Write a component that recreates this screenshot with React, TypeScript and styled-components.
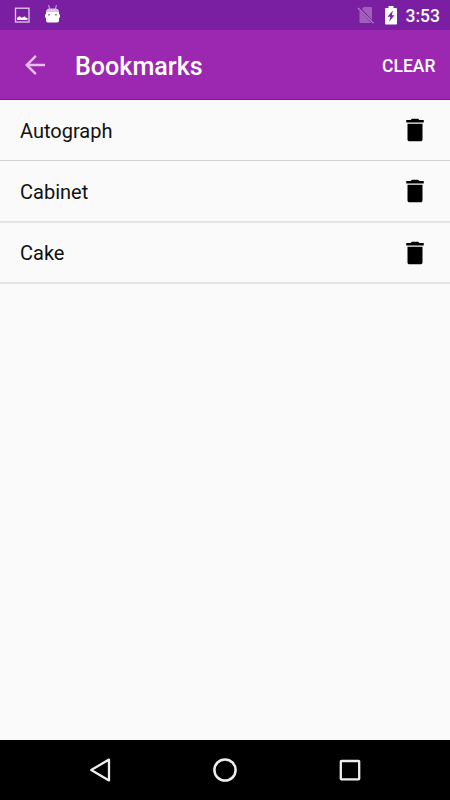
import React from "react";
import styled, { createGlobalStyle } from "styled-components";

const GlobalStyle = createGlobalStyle`
  * { box-sizing: border-box; }
  body { margin: 0; font-family: Roboto, "Liberation Sans", sans-serif; }
  svg { display: block; flex: none; }
`;

const Screen = styled.div`
  display: flex;
  flex-direction: column;
  width: 450px;
  height: 800px;
  background: #fafafa;
  overflow: hidden;
`;

const StatusBar = styled.header`
  display: flex;
  align-items: center;
  justify-content: space-between;
  flex: none;
  height: 30px;
  padding: 0 9.5px 0 14px;
  background: #7b1fa2;
  color: #fff;
`;

const StatusGroup = styled.div<{ $gap: number }>`
  display: flex;
  align-items: center;
  gap: ${({ $gap }) => $gap}px;
`;

const Clock = styled.time`
  width: 35px;
  margin-left: -1px;
  font-size: 17.5px;
  font-weight: 500;
  line-height: 30px;
  padding-top: 2px;
  white-space: nowrap;
`;

const Toolbar = styled.div`
  display: flex;
  align-items: center;
  flex: none;
  height: 70px;
  padding: 1px 14.5px 0 20px;
  background: #9c27b0;
  border-bottom: 1px solid #8a10a0;
  color: #fff;
`;

const BackButton = styled.button`
  width: 30px;
  height: 30px;
  padding: 0;
  border: 0;
  background: none;
`;

const Title = styled.h1`
  flex: 1;
  margin: 4px 0 0 25px;
  font-size: 25.1px;
  font-weight: 500;
  line-height: 30px;
`;

const ClearButton = styled.button`
  padding: 1px 0 0;
  border: 0;
  background: none;
  color: #fff;
  font: 500 17.5px/24px Roboto, "Liberation Sans", sans-serif;
`;

const List = styled.ul`
  flex: 1;
  margin: 0;
  padding: 0;
  list-style: none;
`;

const Row = styled.li`
  display: flex;
  align-items: center;
  justify-content: space-between;
  height: 61px;
  padding: 0 20px;
  border-bottom: 1px solid #d3d3d3;

  & + & {
    border-bottom: 2px solid #e4e4e4;
  }

  &:nth-child(2) {
    height: 62px;
  }
`;

const Word = styled.span`
  padding-top: 1px;
  font-size: 20px;
  line-height: 24px;
  color: #111;
`;

const DeleteButton = styled.button`
  width: 30px;
  height: 30px;
  padding: 0;
  border: 0;
  background: none;
`;

const NavBar = styled.nav`
  display: flex;
  align-items: center;
  justify-content: space-between;
  flex: none;
  height: 60px;
  padding: 0 85px;
  background: #000;
`;

const PictureIcon = () => (
  <svg width="16" height="16" viewBox="0 0 16 16">
    <rect x="1.5" y="1.2" width="13.5" height="13.8" fill="none" stroke="#e2cbea" strokeWidth="1.3" />
    <path d="M3.200 13v-2.500l2.300-1.300 2.500 1.600 2.500-1.600 1.200 1.300 1.800.5v2z" fill="#fff" />
  </svg>
);

const RobotIcon = () => (
  <svg width="16" height="20" viewBox="0 0 16 20">
    <path d="M3.500 0 4.700 4M11.500 0l-1.200 4" stroke="#bd90cf" strokeWidth="1.200" />
    <path d="M1 7.200C1 4.800 2.500 3.600 4.500 3.600h6c2 0 3.500 1.200 3.500 3.600z" fill="#dcc3e5" />
    <path d="M1 7h13v2.200l1 .4v2.800l-1 .4v2.700a1.900 1.900 0 0 1-1.900 1.900H2.900A1.900 1.900 0 0 1 1 15.500v-2.700l-1-.4V9.600l1-.4z" fill="#fff" />
    <path d="M3.200 9h1.700v1.600H3.200zM10.100 9h1.700v1.600h-1.700z" fill="#9d62b8" />
  </svg>
);

const NoSimIcon = () => (
  <svg width="18" height="18" viewBox="0 0 18 18">
    <path d="M6.700 1H14a1 1 0 0 1 1 1v11.900L4.900 3zM2.500 4.500 14.300 17H3.500a1 1 0 0 1-1-1z" fill="#a05fbc" />
    <path d="M1 2 16.500 17.200" stroke="#b37bc8" strokeWidth="1.200" />
  </svg>
);

const BatteryIcon = () => (
  <svg width="12" height="19" viewBox="0 0 12 19">
    <path d="M3.500 0h5v2H11a1 1 0 0 1 1 1v14.500a1 1 0 0 1-1 1H1a1 1 0 0 1-1-1V3a1 1 0 0 1 1-1h2.500z" fill="#fff" />
    <path d="M8 4.500 2.500 10.700h3L4 15.800l5.500-6.500H6.800z" fill="#7b1fa2" />
  </svg>
);

const BackArrowIcon = () => (
  <svg width="30" height="30" viewBox="0 0 24 24">
    <path d="M20 11H7.830l5.590-5.590L12 4l-8 8 8 8 1.410-1.410L7.830 13H20z" fill="#e4bdea" />
  </svg>
);

const TrashIcon = () => (
  <svg width="30" height="30" viewBox="0 0 24 24">
    <path d="M6 19.500c0 .9.700 1.500 1.500 1.500h9c.8 0 1.500-.6 1.500-1.500V7H6zM19 4h-3.500l-1-1h-5l-1 1H5v2h14z" />
  </svg>
);

const NavBackIcon = () => (
  <svg width="30" height="30" viewBox="0 0 30 30" fill="none" stroke="#eee" strokeWidth="2.300" strokeLinejoin="round">
    <path d="M24 4.600v20.800L6.200 15z" />
  </svg>
);

const NavHomeIcon = () => (
  <svg width="30" height="30" viewBox="0 0 30 30">
    <circle cx="15" cy="15" r="10.600" fill="none" stroke="#eee" strokeWidth="2.500" />
  </svg>
);

const NavRecentIcon = () => (
  <svg width="30" height="30" viewBox="0 0 30 30">
    <rect x="5.800" y="6" width="18.400" height="18.400" rx=".6" fill="none" stroke="#eee" strokeWidth="2.300" />
  </svg>
);

const bookmarks = ["Autograph", "Cabinet", "Cake"];

export default function App() {
  return (
    <Screen>
      <GlobalStyle />
      <StatusBar>
        <StatusGroup $gap={15}>
          <PictureIcon />
          <RobotIcon />
        </StatusGroup>
        <StatusGroup $gap={10}>
          <NoSimIcon />
          <BatteryIcon />
          <Clock>3:53</Clock>
        </StatusGroup>
      </StatusBar>
      <Toolbar>
        <BackButton aria-label="Back"><BackArrowIcon /></BackButton>
        <Title>Bookmarks</Title>
        <ClearButton>CLEAR</ClearButton>
      </Toolbar>
      <List>
        {bookmarks.map((word) => (
          <Row key={word}>
            <Word>{word}</Word>
            <DeleteButton aria-label={`Delete ${word}`}><TrashIcon /></DeleteButton>
          </Row>
        ))}
      </List>
      <NavBar>
        <NavBackIcon />
        <NavHomeIcon />
        <NavRecentIcon />
      </NavBar>
    </Screen>
  );
}
